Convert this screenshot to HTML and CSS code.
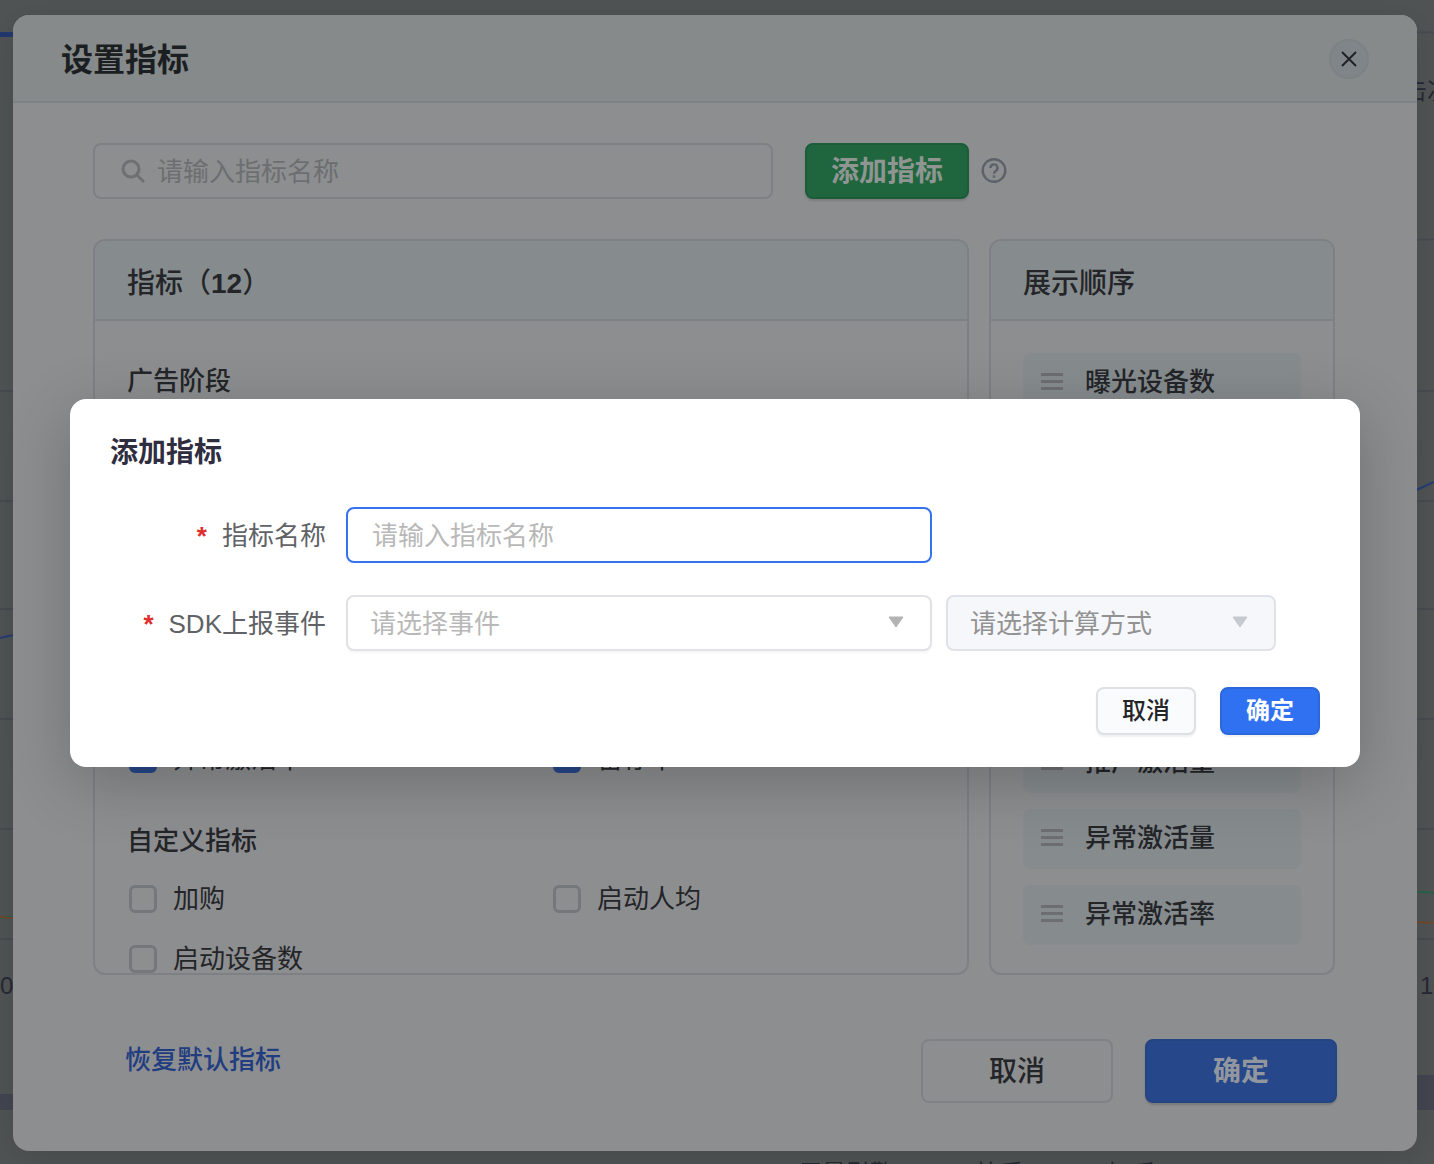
FILE: index.html
```html
<!DOCTYPE html>
<html lang="zh-CN">
<head>
<meta charset="utf-8">
<title>设置指标</title>
<link rel="stylesheet" href="styles.css">
</head>
<body>
<svg class="chart" viewBox="0 0 1434 1164" preserveAspectRatio="none" aria-hidden="true">
  <path d="M0 34.500H20" stroke="#24386f" stroke-width="5"/>
  <path d="M1400 32.500H1434M1400 239.500H1434M0 391H1434M0 501H1434M0 609H1434M0 719H1434M0 829H1434M0 939H1434" stroke="#484c50" stroke-width="2" fill="none"/>
  <path d="M0 638Q8 636 20 634M1410 493L1434 482" stroke="#263d76" stroke-width="2" fill="none"/>
  <path d="M0 918L20 916M1410 891L1434 893" stroke="#2b6148" stroke-width="2"/>
  <path d="M0 917L20 919M1410 922L1434 923" stroke="#6f4a2e" stroke-width="2"/>
  <path d="M0 1094H20V1110H0ZM1410 1075H1434V1110H1410Z" fill="#434650"/>
  <g class="chart-text">
    <text x="1403" y="99">击次数</text>
    <text x="0" y="994">0</text>
    <text x="1420" y="994">10</text>
    <text x="798" y="1182">巨量引擎</text>
    <text x="976" y="1182">快手</text>
    <text x="1108" y="1182">知乎</text>
  </g>
</svg>

<section class="settings" aria-label="设置指标">
  <header class="settings-head">
    <h1>设置指标</h1>
    <button class="close" type="button" aria-label="关闭">
      <svg width="18" height="18" viewBox="0 0 18 18"><path d="M2 2L16 16M16 2L2 16" stroke="#1f2226" stroke-width="2"/></svg>
    </button>
  </header>
  <div class="settings-body">
    <div class="tools">
      <label class="search">
        <svg width="26" height="26" viewBox="0 0 26 26" fill="none" stroke="#6e7072" stroke-width="3"><circle cx="12" cy="11" r="8"/><path d="M18 17L25 24"/></svg>
        <input type="text" placeholder="请输入指标名称" aria-label="搜索指标">
      </label>
      <button class="add" type="button">添加指标</button>
      <svg class="help" width="26" height="26" viewBox="0 0 26 26" fill="none" stroke="#5c6269" stroke-width="2.400"><circle cx="13" cy="12.500" r="11.300"/><path d="M9.500 10a3.500 3.500 0 1 1 5.300 2.900c-1.300.8-1.800 1.300-1.800 2.600v.3"/><path d="M13 17.300v2.400"/></svg>
    </div>
    <div class="panels">
      <section class="panel">
        <h2>指标（<b>12</b>）</h2>
        <div class="metrics">
          <h3>广告阶段</h3>
          <div class="grid stage">
            <label><input type="checkbox" checked>异常激活率</label>
            <label><input type="checkbox" checked>留存率</label>
          </div>
          <h3>自定义指标</h3>
          <div class="grid">
            <label><input type="checkbox">加购</label>
            <label><input type="checkbox">启动人均</label>
            <label><input type="checkbox">启动设备数</label>
          </div>
        </div>
      </section>
      <section class="panel order">
        <h2>展示顺序</h2>
        <ul>
          <li><i class="grip"></i>曝光设备数</li>
          <li><i class="grip"></i>点击设备数</li>
          <li><i class="grip"></i>点击率</li>
          <li><i class="grip"></i>激活设备数</li>
          <li><i class="grip"></i>激活率</li>
          <li><i class="grip"></i>推广激活量</li>
          <li><i class="grip"></i>异常激活量</li>
          <li><i class="grip"></i>异常激活率</li>
        </ul>
      </section>
    </div>
    <footer class="settings-foot">
      <a href="#">恢复默认指标</a>
      <button class="big" type="button">取消</button>
      <button class="big primary" type="button">确定</button>
    </footer>
  </div>
</section>

<form class="dialog" role="dialog" aria-label="添加指标">
  <h2>添加指标</h2>
  <div class="field">
    <label for="name"><b>*</b>指标名称</label>
    <input class="control name" id="name" type="text" placeholder="请输入指标名称">
  </div>
  <div class="field">
    <label for="event"><b>*</b>SDK上报事件</label>
    <div class="select wide">
      <select class="control" id="event"><option>请选择事件</option></select>
      <svg width="16" height="12" viewBox="0 0 16 12"><path d="M1 1H15L8 11Z" fill="#b3b3b3" stroke="#b3b3b3" stroke-linejoin="round"/></svg>
    </div>
    <div class="select calc">
      <select class="control" aria-label="计算方式" disabled><option>请选择计算方式</option></select>
      <svg width="16" height="12" viewBox="0 0 16 12"><path d="M1 1H15L8 11Z" fill="#c5c9d0" stroke="#c5c9d0" stroke-linejoin="round"/></svg>
    </div>
  </div>
  <div class="actions">
    <button type="button">取消</button>
    <button class="ok" type="button">确定</button>
  </div>
</form>
</body>
</html>
```
FILE: styles.css
```css
* { box-sizing: border-box; }
body {
  margin: 0;
  padding: 15px 17px 13px 13px;
  position: relative;
  overflow: hidden;
  background: #505455;
  color: #232528;
  font: 26px/36px "Liberation Sans", "Noto Sans CJK SC", sans-serif;
}
button, input, select { font: inherit; color: inherit; margin: 0; }
button { padding: 2px 0 0; display: flex; align-items: center; justify-content: center; font-weight: 500; }
h1, h2, h3, ul { margin: 0; padding: 0; font-weight: 500; }
.chart { position: absolute; left: 0; top: 0; width: 100%; height: 100%; }
.chart-text { fill: #262933; font-size: 24px; }

.settings {
  position: relative;
  background: #8d8e90;
  border-radius: 16px;
  box-shadow: 0 8px 40px rgba(0, 0, 0, .12);
}
.settings-head {
  height: 88px;
  padding: 2px 48px 0;
  display: flex;
  align-items: center;
  justify-content: space-between;
  background: #868a8b;
  border-bottom: 2px solid #7f8284;
  border-radius: 16px 16px 0 0;
}
h1 { padding-top: 2px; font-size: 32px; line-height: 48px; font-weight: 700; color: #1c1f22; }
.close { width: 40px; height: 40px; padding: 0; border: 2px solid #7d8285; border-radius: 50%; background: #80858a; }
.settings-body { padding: 40px 82px 48px 80px; }
.tools { display: flex; align-items: center; height: 56px; margin-bottom: 40px; }
.search {
  flex: 0 1 680px;
  height: 56px;
  display: flex;
  align-items: center;
  gap: 12px;
  padding: 0 24px;
  border: 2px solid #7e8083;
  border-radius: 8px;
}
.search input { flex: 1; min-width: 0; border: 0; padding: 2px 0 0; background: none; outline: 0; }
.search input::placeholder { color: #6c6e71; opacity: 1; }
.add {
  width: 164px;
  height: 56px;
  margin-left: 32px;
  border: 2px solid #1d5c38;
  border-radius: 8px;
  background: #1f653e;
  color: #8f9692;
  font-size: 28px;
  font-weight: 700;
  box-shadow: 0 2px 2px rgba(0, 0, 0, .12);
}
.help { margin-left: 12px; }
.panels { display: flex; gap: 20px; height: 736px; }
.panel {
  flex: 1;
  overflow: hidden;
  border: 2px solid #7e8184;
  border-radius: 12px;
}
.order { flex: 0 0 346px; }
.panel h2 {
  height: 80px;
  padding: 0 32px;
  font-size: 28px;
  line-height: 86px;
  background: #868b8e;
  border-bottom: 2px solid #7e8184;
}
.metrics { padding: 42px 32px 0; }
.metrics h3 { font-size: 26px; }
.grid { display: grid; grid-template-columns: 1fr 1fr; row-gap: 24px; padding: 22px 0; margin-right: -40px; }
.stage { padding: 342px 0 46px; }
.grid label { display: flex; align-items: center; gap: 16px; }
.grid input {
  appearance: none;
  width: 28px;
  height: 28px;
  margin: 0 0 0 2px;
  border: 3px solid #75787b;
  border-radius: 6px;
}
.grid input:checked { background: #264789; border-color: #264789; }
.order ul { display: grid; gap: 16px; padding: 32px; list-style: none; }
.order li { height: 60px; display: flex; align-items: center; gap: 22px; padding: 0 18px 2px; border-radius: 8px; background: #868b8e; }
.grip { width: 22px; height: 17px; margin-bottom: 2px; border: solid #6c6e71; border-width: 3px 0; background: linear-gradient(#6c6e71, #6c6e71) center / 22px 3px no-repeat; }
.settings-foot { display: flex; align-items: center; gap: 32px; margin: 64px -2px 0 32px; }
.settings-foot a { margin: 0 auto 22px 0; color: #213d80; font-weight: 500; text-decoration: none; }
.big { width: 192px; height: 64px; border: 2px solid #7f8184; border-radius: 8px; background: #8d8e90; font-size: 28px; }
.primary { border-color: #254482; background: #264789; color: #92979f; font-weight: 700; box-shadow: 0 2px 2px rgba(0, 0, 0, .15); }

.dialog {
  position: absolute;
  left: 70px;
  right: 74px;
  top: 399px;
  padding: 34px 40px 32px;
  display: grid;
  gap: 32px;
  border-radius: 16px;
  background: #fff;
  box-shadow: 0 16px 64px rgba(0, 0, 0, .22);
}
.dialog h2 { margin-bottom: 2px; color: #2f2d40; font-size: 28px; line-height: 40px; font-weight: 700; }
.field { display: flex; align-items: center; height: 56px; color: #606266; }
.field > label { width: 216px; margin-right: 20px; padding-top: 2px; text-align: right; }
.field b { margin-right: 15px; color: #e02d2d; font-weight: 700; }
.control { width: 100%; height: 56px; padding: 2px 22px 0; border: 2px solid #e0e2e8; border-radius: 8px; background: #fff; outline: 0; appearance: none; color: #b8b8b8; box-shadow: 0 2px 2px rgba(0, 0, 0, .04); }
.control::placeholder { color: #b8b8b8; opacity: 1; }
.name { flex: 0 1 586px; padding: 2px 24px 0; border-color: #3472ee; box-shadow: none; }
.select { position: relative; }
.select svg { position: absolute; right: 28px; top: 21px; }
.wide { flex: 0 1 586px; }
.calc { flex: 0 1 330px; margin-left: 14px; }
.control:disabled { background: #f6f7fa; color: #929292; opacity: 1; box-shadow: none; }
.actions { display: flex; justify-content: flex-end; gap: 24px; margin-top: 4px; }
.actions button { width: 100px; height: 48px; padding: 0; border: 2px solid #dee0e3; border-radius: 8px; background: #fafbfc; font-size: 24px; box-shadow: 0 2px 2px rgba(0, 0, 0, .06); }
.actions .ok { border-color: #2c68dc; background: #3071f2; color: #fff; font-weight: 700; }
```
